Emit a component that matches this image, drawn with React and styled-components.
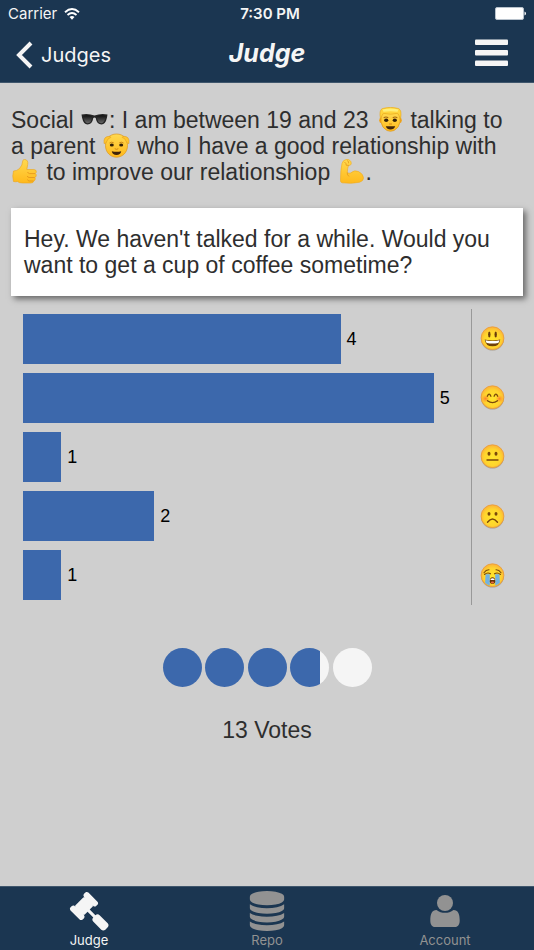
import React from 'react';
import styled, { createGlobalStyle } from 'styled-components';

const votes = [
    { mood: 'grinning', count: 4 },
    { mood: 'smiling', count: 5 },
    { mood: 'neutral', count: 1 },
    { mood: 'frowning', count: 2 },
    { mood: 'crying', count: 1 },
];

const score = 3.78;

// the vote axis starts a bit below 1 so single votes still get a bar
const AXIS_MIN = 0.59;
const AXIS_MAX = 5.4;

const barWidth = (count) => `${((count - AXIS_MIN) / (AXIS_MAX - AXIS_MIN)) * 100}%`;

const faces = {
    grinning: (
        <>
            <ellipse cx="8.8" cy="8.3" rx="1.2" ry="2.9" fill="#6a3c0c" />
            <ellipse cx="15.2" cy="8.3" rx="1.2" ry="2.9" fill="#6a3c0c" />
            <path d="M4.2 13.2Q12 15.2 19.8 13.2Q19 20 12 20T4.2 13.2Z" fill="#704009" />
            <path d="M5 14Q12 15.7 19 14Q18.6 16.5 17.5 16.7Q12 17.8 6.5 16.7Q5.4 16.5 5 14Z" fill="#fff" />
        </>
    ),
    smiling: (
        <>
            <circle cx="5" cy="13.5" r="4" fill="url(#blush)" />
            <circle cx="19" cy="13.5" r="4" fill="url(#blush)" />
            <path d="M6.8 11Q8.6 7 10.4 11M13.6 11Q15.4 7 17.2 11M7 15.500Q12 19.3 17 15.5" fill="none" stroke="#7a480a" strokeWidth="1.3" strokeLinecap="round" />
        </>
    ),
    neutral: (
        <>
            <ellipse cx="8.5" cy="9.5" rx="1.5" ry="2" fill="#7a480a" />
            <ellipse cx="15.5" cy="9.5" rx="1.5" ry="2" fill="#7a480a" />
            <path d="M6.5 15.8H17.5" stroke="#7a480a" strokeWidth="1.4" strokeLinecap="round" />
        </>
    ),
    frowning: (
        <>
            <ellipse cx="8.5" cy="9.6" rx="1.5" ry="1.9" fill="#7a480a" />
            <ellipse cx="15.5" cy="9.6" rx="1.5" ry="1.9" fill="#7a480a" />
            <path d="M7 18Q12 11.5 17 18" fill="none" stroke="#7a480a" strokeWidth="1.4" strokeLinecap="round" />
        </>
    ),
    crying: (
        <>
            <path d="M5 11H9.3V22.4Q6.5 21.5 4.6 19.5ZM14.7 11H19L19.4 19.5Q17.5 21.5 14.7 22.4Z" fill="#72b2e2" />
            <path d="M3.5 9.5Q5.5 6.5 8.5 6.6M20.5 9.5Q18.5 6.5 15.5 6.6M4 11.3Q7 8.8 10 10.6M20 11.3Q17 8.8 14 10.6" fill="none" stroke="#7a480a" strokeWidth="1.1" strokeLinecap="round" />
            <path d="M9.3 18Q9.3 14 12 14T14.7 18Q14.6 20.6 12 20.6T9.3 18Z" fill="#6a3408" />
            <path d="M10 16Q12 14 14 16V16.9H10Z" fill="#fff" />
            <ellipse cx="12" cy="19.2" rx="1.6" ry=".8" fill="#ee6b45" />
        </>
    ),
};

const MoodFace = ({ mood }) => (
    <FaceSvg viewBox="0 0 25 25" role="img" aria-label={mood}>
        <circle cx="12.5" cy="13.2" r="11.4" fill="#8f8470" opacity=".6" />
        <circle cx="12.5" cy="12.2" r="11.4" fill="url(#face)" stroke="#e8993a" strokeWidth=".8" />
        <g transform="translate(.5 .2)">{faces[mood]}</g>
    </FaceSvg>
);

const Gradients = () => (
    <HiddenSvg aria-hidden="true">
        <defs>
            <radialGradient id="face" cx=".5" cy=".55" r=".55">
                <stop offset="0" stopColor="#ffe52b" />
                <stop offset=".65" stopColor="#ffd52e" />
                <stop offset="1" stopColor="#fbb13a" />
            </radialGradient>
            <radialGradient id="blush">
                <stop offset="0" stopColor="#ff6a2c" stopOpacity=".8" />
                <stop offset="1" stopColor="#ff8a2c" stopOpacity="0" />
            </radialGradient>
            <linearGradient id="skin" x1="0" y1="0" x2="0" y2="1">
                <stop offset="0" stopColor="#ffd94f" />
                <stop offset="1" stopColor="#ffb91c" />
            </linearGradient>
            <linearGradient id="lens" x1="0" y1="0" x2="0" y2="1">
                <stop offset="0" stopColor="#111" />
                <stop offset="1" stopColor="#686868" />
            </linearGradient>
        </defs>
    </HiddenSvg>
);

const Sunglasses = () => (
    <Emoji viewBox="0 0 29 25" role="img" aria-label="sunglasses">
        <path d="M1.5 7.5Q8 6 14.5 8.5Q21 6 27.5 7.5L27 10.5Q25.5 17.5 21.5 17.5Q16.8 17.5 15.7 11Q14.5 10 13.3 11Q12.2 17.5 7.5 17.5Q3.5 17.5 2 10.5Z" fill="#252525" />
        <path d="M3.2 9Q8 7.5 12.3 9.5Q11.5 16.3 7.6 16.3Q4.3 16.3 3.2 9ZM16.7 9.5Q21 7.5 25.8 9Q24.7 16.3 21.4 16.3Q17.5 16.3 16.7 9.5Z" fill="url(#lens)" />
    </Emoji>
);

const Man = () => (
    <Emoji viewBox="0 0 29 25" role="img" aria-label="man">
        <ellipse cx="5.8" cy="13.3" rx="1.6" ry="2.6" fill="#f2a51c" />
        <ellipse cx="25.2" cy="13.3" rx="1.6" ry="2.6" fill="#f2a51c" />
        <path d="M6 6H25V15Q24 21 19 23.5Q15.5 25 12 23.5Q7 21 6 15Z" fill="url(#skin)" stroke="#dc961a" strokeWidth=".7" />
        <path d="M5.5 12Q3.8 3 7.500 1.5Q15.5-1 23.5 1.5Q27.2 3 25.5 12L24.2 9Q23.5 6 21.5 6.5Q15.5 8 9.5 6.5Q7.5 6 6.8 9Z" fill="#ffd43c" stroke="#e6a51b" strokeWidth=".6" />
        <path d="M7.5 2.5Q15.5 .5 23.5 2.500L22.5 4.8Q15.5 3.5 8.5 4.8Z" fill="#fff078" />
        <path d="M8.7 10.8Q11 9.300 13.2 10.8M17.8 10.8Q20 9.300 22.300 10.8" fill="none" stroke="#a56712" strokeWidth="1.100" />
        <ellipse cx="11.2" cy="13.200" rx="2.100" ry="1.700" fill="#332008" />
        <ellipse cx="19.8" cy="13.200" rx="2.100" ry="1.700" fill="#332008" />
        <path d="M14 17H17" stroke="#d88c16" strokeWidth="1" />
        <path d="M10.8 19.2H20.2Q19 22.4 15.5 22.4T10.8 19.2Z" fill="#40240a" />
    </Emoji>
);

const Parent = () => (
    <Emoji viewBox="0 0 29 25" role="img" aria-label="parent">
        <path d="M14.5 1C21.5 1 25.500 6 25.500 12.5C25.500 19.5 20.500 24.2 14.5 24.2S3.500 19.5 3.500 12.5C3.500 6 7.500 1 14.5 1Z" fill="url(#skin)" stroke="#dc961a" strokeWidth=".7" />
        <path d="M8 3.3Q1 2.800 2 10.5Q4 11 5 8Q6 5 8.8 4.5ZM21 3.300Q28 2.800 27 10.5Q25 11 24 8Q23 5 20.2 4.5Z" fill="#ffc52f" stroke="#dc961a" strokeWidth=".5" />
        <path d="M7.5 10Q9.700 8.500 11.7 9.8M17.3 9.8Q19.300 8.5 21.5 10" fill="none" stroke="#c27d14" strokeWidth=".9" />
        <ellipse cx="9.8" cy="12" rx="2" ry="1.600" fill="#332008" />
        <ellipse cx="19.2" cy="12" rx="2" ry="1.600" fill="#332008" />
        <path d="M12.7 15.7Q14.5 17 16.3 15.7" fill="none" stroke="#c98315" strokeWidth=".9" />
        <path d="M9.8 18.2Q14.5 19.5 19.2 18.2Q18.500 22 14.5 22T9.8 18.2Z" fill="#40240a" />
    </Emoji>
);

const ThumbsUp = () => (
    <Emoji viewBox="0 0 29 25" role="img" aria-label="thumbs up">
        <path d="M2.5 12Q6 12 8.5 9.5Q11.5 6.5 11.7 2Q12 .3 13.7 .4Q17.5 1 16.7 5.5L15.8 10.5H22.8Q25.5 10.7 25.3 12.8Q25.2 14 24.4 14.6Q25.6 15.5 25.2 17Q24.9 18.1 23.8 18.5Q24.7 19.7 24 21Q23.5 21.8 22.6 22Q22.5 24 20 24H11.5Q8 24 6.5 22.5Q4.5 23 2.5 22.5Q1 17 2.5 12Z" fill="url(#skin)" stroke="#eba41c" strokeWidth=".6" />
        <path d="M24 14.6H18.5Q17 14.3 16.5 13M23.7 18.5H18Q16.5 18.3 16.3 17M22.5 22H18Q16.7 21.7 16.5 20.5" fill="none" stroke="#e3941a" strokeWidth=".8" />
    </Emoji>
);

const Muscle = () => (
    <Emoji viewBox="0 0 29 25" role="img" aria-label="flexed arm">
        <path d="M5 4.5Q6 1 9 .6Q11-.2 13 1.5Q14.5 2.5 14.2 5Q13.7 6.7 11.5 6.4Q10.5 9 10.3 13.5Q12 14.8 13.5 14Q17.5 10.5 21.5 12.5Q26.5 15 26.5 19Q26.5 22 22.5 23.3Q14.5 25 5 23.8Q3.3 23.5 3.5 21Q3.5 11 5 4.5Z" fill="url(#skin)" stroke="#efaa20" strokeWidth=".6" />
        <path d="M7.5 3Q9.5 4.5 9.2 6.2L11.8 6.4M10 1.5Q12.5 2.5 11.5 4.3M10.2 13.5Q10 16 12 17.5" fill="none" stroke="#e3941a" strokeWidth=".8" />
    </Emoji>
);

const GavelIcon = () => (
    <TabSvg viewBox="0 0 1792 1792" aria-hidden="true">
        <path d="M1771 1536q0 53-37 90l-107 108q-39 37-91 37-53 0-90-37l-363-364q-38-36-38-90 0-53 43-96l-256-256-126 126q-14 14-34 14t-34-14q2 2 12.5 12t12.5 13 10 11.5 10 13.5 6 13.5 5.5 16.5 1.5 18q0 38-28 68-3 3-16.5 18t-19 20.5-18.5 16.5-22 15.5-22 9-26 4.5q-40 0-68-28l-408-408q-28-28-28-68 0-13 4.5-26t9-22 15.5-22 16.5-18.5 20.5-19 18-16.5q30-28 68-28 10 0 18 1.5t16.5 5.5 13.5 6 13.5 10 11.5 10 13 12.5 12 12.5q-14-14-14-34t14-34l348-348q14-14 34-14t34 14q-2-2-12.5-12t-12.5-13-10-11.5-10-13.5-6-13.5-5.5-16.5-1.5-18q0-38 28-68 3-3 16.5-18t19-20.5 18.5-16.5 22-15.5 22-9 26-4.5q40 0 68 28l408 408q28 28 28 68 0 13-4.5 26t-9 22-15.5 22-16.5 18.5-20.5 19-18 16.5q-30 28-68 28-10 0-18-1.5t-16.5-5.5-13.5-6-13.5-10-11.5-10-13-12.5-12-12.5q14 14 14 34t-14 34l-126 126 256 256q43-43 96-43 52 0 91 37l363 363q37 39 37 91z" />
    </TabSvg>
);

const DatabaseIcon = () => (
    <TabSvg viewBox="0 0 1792 1792" aria-hidden="true">
        <path d="M896 768q237 0 443-43t325-127v170q0 69-103 128t-280 93.5-385 34.5-385-34.5-280-93.5-103-128v-170q119 84 325 127t443 43zm0 768q237 0 443-43t325-127v170q0 69-103 128t-280 93.5-385 34.5-385-34.5-280-93.5-103-128v-170q119 84 325 127t443 43zm0-384q237 0 443-43t325-127v170q0 69-103 128t-280 93.5-385 34.5-385-34.5-280-93.5-103-128v-170q119 84 325 127t443 43zm0-1152q208 0 385 34.5t280 93.5 103 128v128q0 69-103 128t-280 93.5-385 34.5-385-34.5-280-93.5-103-128v-128q0-69 103-128t280-93.5 385-34.5z" />
    </TabSvg>
);

const UserIcon = () => (
    <TabSvg viewBox="0 0 40 40" aria-hidden="true">
        <circle cx="20" cy="12" r="8" />
        <path d="M11.5 19C7 19 5.3 23 5.3 29.5C5.3 33.5 7 36 10 36H30C33 36 34.7 33.5 34.7 29.5C34.7 23 33 19 28.5 19C23.5 22.8 16.5 22.8 11.5 19Z" />
    </TabSvg>
);

const App = () => {
    return (
        <Screen>
            <GlobalStyle />
            <Gradients />
            <Header>
                <StatusBar>
                    <Carrier>
                        Carrier
                        <svg width="16" height="12" viewBox="0 0 16 12" aria-hidden="true">
                            <path d="M1 4.2Q8-2 15 4.2M3.5 7Q8 3.2 12.5 7" fill="none" stroke="#fff" strokeWidth="1.9" />
                            <path d="M5.5 9Q8 7 10.5 9L8 11.8Z" fill="#fff" />
                        </svg>
                    </Carrier>
                    <Clock>7:30 PM</Clock>
                    <Battery width="32" height="13" viewBox="0 0 32 13" role="img" aria-label="Battery full">
                        <rect x="1.5" y=".5" width="28" height="12" rx="1.5" fill="#fff" stroke="#b8c2cc" />
                        <path d="M30.500 4.5Q32 5 32 6.5T30.500 8.5Z" fill="#fff" />
                    </Battery>
                </StatusBar>
                <NavBar>
                    <BackLink href="#judges">
                        <svg width="17" height="28" viewBox="0 0 17 28" aria-hidden="true">
                            <path d="M15 2L3 14L15 26" fill="none" stroke="#f5f5f5" strokeWidth="4" />
                        </svg>
                        Judges
                    </BackLink>
                    <Title>Judge</Title>
                    <MenuButton type="button" aria-label="Menu">
                        <svg width="33" height="28" viewBox="0 0 33 28" aria-hidden="true">
                            <rect y=".5" width="33" height="5.5" rx="1" />
                            <rect y="11" width="33" height="5.5" rx="1" />
                            <rect y="21.5" width="33" height="5.5" rx="1" />
                        </svg>
                    </MenuButton>
                </NavBar>
            </Header>

            <Content>
                <Prompt>
                    Social <Sunglasses />: I am between 19 and 23 <Man /> talking to a parent <Parent /> who I have a good
                    relationship with <ThumbsUp /> to improve our relationshiop <Muscle />.
                </Prompt>
                <MessageCard>
                    Hey. We haven't talked for a while. Would you want to get a cup of coffee sometime?
                </MessageCard>
                <Chart>
                    <Plot>
                        {votes.map((vote) => (
                            <BarRow key={vote.mood}>
                                <Bar style={{ width: barWidth(vote.count) }} />
                                <BarValue>{vote.count}</BarValue>
                            </BarRow>
                        ))}
                    </Plot>
                    <Moods>
                        {votes.map((vote) => (
                            <MoodFace key={vote.mood} mood={vote.mood} />
                        ))}
                    </Moods>
                </Chart>
                <Rating role="img" aria-label="Rating">
                    {[0, 1, 2, 3, 4].map((n) => (
                        <Dot key={n} $fill={Math.round(Math.min(Math.max(score - n, 0), 1) * 100)} />
                    ))}
                </Rating>
                <VoteTotal>13 Votes</VoteTotal>
            </Content>

            <TabBar>
                <Tab href="#judge" $active>
                    <GavelIcon />
                    Judge
                </Tab>
                <Tab href="#repo">
                    <DatabaseIcon />
                    Repo
                </Tab>
                <Tab href="#account">
                    <UserIcon />
                    Account
                </Tab>
            </TabBar>
        </Screen>
    );
};

const GlobalStyle = createGlobalStyle`
    * {
        box-sizing: border-box;
    }

    body {
        margin: 0;
        background-color: #cfcfcf;
    }
`;

const Screen = styled.div`
    display: flex;
    flex-direction: column;
    min-height: 100vh;
    background-color: #cfcfcf;
    color: #2e2e2e;
    font-family: "Liberation Sans", Arial, sans-serif;
    font-size: 23px;
    line-height: 26px;
`;

const Header = styled.header`
    background-color: #1b3651;
    border-bottom: 1px solid #3f566c;
    color: #f5f5f5;
    font-family: Inter, sans-serif;
`;

const StatusBar = styled.div`
    display: grid;
    grid-template-columns: 1fr auto 1fr;
    align-items: center;
    height: 27px;
    padding: 0 8px;
    font-size: 15px;
    line-height: 27px;
`;

const Carrier = styled.span`
    display: flex;
    align-items: center;
    gap: 7px;
`;

const Clock = styled.span`
    font-weight: 600;
    padding-left: 6px;
`;

const Battery = styled.svg`
    justify-self: end;
`;

const NavBar = styled.nav`
    display: grid;
    grid-template-columns: 1fr auto 1fr;
    align-items: center;
    height: 55px;
    padding: 0 26px 3px 16px;
`;

const BackLink = styled.a`
    display: flex;
    align-items: center;
    gap: 8px;
    padding-top: 3px;
    color: inherit;
    font-size: 20px;
    text-decoration: none;
`;

const Title = styled.h1`
    margin: 0;
    padding-left: 10px;
    font-size: 25px;
    font-style: italic;
    font-weight: 700;
`;

const MenuButton = styled.button`
    display: flex;
    justify-self: end;
    padding: 0;
    border: none;
    background: none;
    cursor: pointer;

    svg {
        fill: #f5f5f5;
    }
`;

const Content = styled.main`
    flex: 1;
    padding: 24px 11px;
`;

const Prompt = styled.p`
    margin: 0 0 23px;
    padding-right: 14px;
`;

const Emoji = styled.svg`
    width: 29px;
    height: 25px;
    vertical-align: -4px;
`;

const HiddenSvg = styled.svg`
    position: absolute;
    width: 0;
    height: 0;
`;

const MessageCard = styled.p`
    margin: 0;
    padding: 18px 13px;
    background-color: #fff;
    box-shadow: 3px 3px 6px rgba(0, 0, 0, 0.5);
`;

const Chart = styled.section`
    display: flex;
    gap: 8px;
    margin-top: 13px;
    padding: 0 18px 0 12px;
`;

const Plot = styled.div`
    display: flex;
    flex: 1;
    flex-direction: column;
    gap: 9px;
    padding: 5px 0;
    border-right: 1px solid #999;
`;

const BarRow = styled.div`
    display: flex;
    align-items: center;
    gap: 6px;
    height: 50px;
`;

const Bar = styled.div`
    height: 100%;
    background-color: #3c68ac;
`;

const BarValue = styled.span`
    color: #000;
    font-size: 18px;
`;

const Moods = styled.div`
    display: flex;
    flex-direction: column;
    justify-content: space-around;
`;

const FaceSvg = styled.svg`
    width: 25px;
    height: 25px;
`;

const Rating = styled.div`
    display: flex;
    justify-content: space-between;
    width: 209px;
    margin: 43px auto 30px;
`;

const Dot = styled.span`
    width: 39px;
    height: 39px;
    border-radius: 50%;
    background: linear-gradient(to right, #3c68ac ${(props) => props.$fill}%, #f5f5f5 ${(props) => props.$fill}%);
`;

const VoteTotal = styled.p`
    margin: 0;
    text-align: center;
`;

const TabBar = styled.nav`
    display: flex;
    background-color: #1b3651;
    border-top: 1px solid #3f566c;
`;

const Tab = styled.a`
    display: flex;
    flex: 1;
    flex-direction: column;
    align-items: center;
    padding-top: 4px;
    color: ${(props) => (props.$active ? '#f5f5f5' : '#929292')};
    font-family: Inter, sans-serif;
    font-size: 13px;
    line-height: 19px;
    text-decoration: none;
`;

const TabSvg = styled.svg`
    width: 40px;
    height: 40px;
    fill: currentColor;
`;

export default App;
